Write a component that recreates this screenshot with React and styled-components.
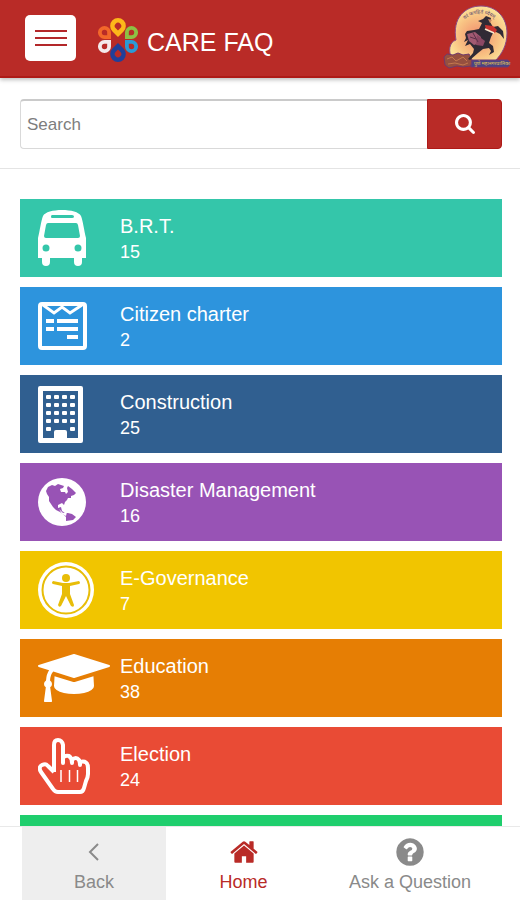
import React, { useState } from "react";
import styled, { createGlobalStyle } from "styled-components";

const GlobalStyle = createGlobalStyle`
    * {
        box-sizing: border-box;
    }
    body {
        margin: 0;
        background: #fff;
        font-family: "Liberation Sans", Arial, sans-serif;
    }
`;

const Page = styled.div`
    display: flex;
    flex-direction: column;
    height: 100vh;
`;

const Header = styled.header`
    display: flex;
    align-items: center;
    flex-shrink: 0;
    height: 78px;
    padding: 0 9px 0 25px;
    background: #b92b27;
    border-bottom: 2px solid #ae1a17;
    box-shadow: 0 2px 4px rgba(0, 0, 0, 0.25);
`;

const MenuButton = styled.button`
    display: flex;
    flex-direction: column;
    align-items: center;
    justify-content: center;
    gap: 5px;
    width: 51px;
    height: 46px;
    padding: 0;
    border: none;
    border-radius: 5px;
    background: #fff;
`;

const MenuLine = styled.span`
    width: 32px;
    height: 2px;
    background: #b3282a;
`;

const Brand = styled.div`
    display: flex;
    align-items: center;
    flex: 1;
    gap: 9px;
    margin-left: 22px;
    padding-top: 4px;
`;

const Title = styled.h1`
    margin: 0;
    padding-top: 4px;
    color: #fff;
    font-size: 25px;
    font-weight: 400;
    line-height: 30px;
`;

const SearchForm = styled.form`
    display: flex;
    flex-shrink: 0;
    padding: 21px 18px 19px 20px;
    border-bottom: 1px solid #e4e4e4;
`;

const SearchInput = styled.input`
    flex: 1;
    min-width: 0;
    height: 50px;
    padding: 0 6px;
    border: 1px solid #d9d9d9;
    border-top: 2px solid #cacaca;
    border-right: none;
    border-radius: 4px 0 0 4px;
    color: #555;
    font-family: inherit;
    font-size: 17px;

    &::placeholder {
        color: #7d7d7d;
    }
`;

const SearchButton = styled.button`
    display: flex;
    align-items: center;
    justify-content: center;
    width: 75px;
    height: 50px;
    padding: 0;
    border: 1px solid #ae1a17;
    border-radius: 0 4px 4px 0;
    background: #b92b27;
    color: #fff;
`;

const List = styled.main`
    display: flex;
    flex-direction: column;
    flex: 1;
    gap: 10px;
    min-height: 0;
    padding: 30px 18px 0 20px;
    overflow: hidden;
`;

const Card = styled.a`
    display: flex;
    align-items: center;
    flex-shrink: 0;
    height: 78px;
    padding-left: 18px;
    background: ${({ $color }) => $color};
    color: #fff;
    text-decoration: none;
`;

const IconSlot = styled.span`
    display: flex;
    width: 82px;
    color: #fff;
`;

const CardText = styled.span`
    display: flex;
    flex-direction: column;
    padding-top: 2px;
`;

const CardName = styled.span`
    font-size: 20px;
    line-height: 26px;
`;

const CardCount = styled.span`
    font-size: 18px;
    line-height: 26px;
`;

const BottomNav = styled.nav`
    display: grid;
    grid-template-columns: 144fr 155fr 178fr;
    flex-shrink: 0;
    height: 74px;
    padding: 0 21px 0 22px;
    border-top: 1px solid #e9e9e9;
    background: #fff;
`;

const NavItem = styled.a`
    display: flex;
    flex-direction: column;
    align-items: center;
    padding-top: 8px;
    background: ${({ $shaded }) => ($shaded ? "#eee" : "transparent")};
    color: ${({ $active }) => ($active ? "#b92b27" : "#8a8a8a")};
    font-size: 18px;
    line-height: 26px;
    text-decoration: none;
`;

const NavIcon = styled.span`
    display: flex;
    align-items: center;
    height: 34px;
`;

// each petal points at the middle of the flower, tip at 0,0
const PETALS = [
    ["#f2672a", "translate(13 21) rotate(-45) scale(.93)"],
    ["#8dc044", "translate(27 21) rotate(45) scale(.93)"],
    ["#f4e9ea", "translate(13 22) rotate(-135) scale(.93)"],
    ["#2a9bd6", "translate(27 22) rotate(135) scale(.93)"],
    ["#fdb71a", "translate(20 19) scale(1.12)"],
    ["#213f99", "translate(20 25) rotate(180) scale(1.12)"],
];

const CareLogo = () => (
    <svg width="40" height="44" viewBox="0 0 40 44" aria-hidden="true">
        {PETALS.map(([fill, transform]) => (
            <g key={fill} transform={transform}>
                <path d="M0 0L-4.950 -4.950A7 7 0 1 1 4.950 -4.950Z" fill={fill} />
                <path d="M0 -5.800L-2 -7.800A2.900 2.900 0 1 1 2 -7.800Z" fill="#b92b27" />
            </g>
        ))}
    </svg>
);

const CityEmblem = () => (
    <svg width="68" height="68" viewBox="0 0 68 68" role="img" aria-label="City emblem">
        <defs>
            <radialGradient id="sun" cx=".5" cy=".55" r=".6">
                <stop offset="0" stopColor="#f08a6c" />
                <stop offset=".6" stopColor="#f8c283" />
                <stop offset="1" stopColor="#fdec9f" />
            </radialGradient>
            <path id="arc" d="M17 23A22 22 0 0 1 57 22" />
        </defs>
        <path
            d="M9 54C5 48 6 38 13 36C9 14 22 2 38 2C54 2 64 14 64 29C64 41 59 50 52 57H12Z"
            fill="url(#sun)"
            stroke="#8a4a86"
            strokeWidth="1"
        />
        <path
            d="M1 53L4 50L10 51L15 49L20 51L26 50L29 56L28 62L20 63L14 62L6 64L2 61Z"
            fill="#96503f"
            stroke="#70396b"
        />
        <path
            d="M4 55L9 53L13 57L20 53L24 57M5 60L12 59L20 61L25 59"
            fill="none"
            stroke="#c5784e"
        />
        <path
            d="M23 34L21 38L25 36L22 42L27 40L31 45L30 49L25 55L27 56L35 49L40 45L46 44L48 47L46 51L51 48L50 42L46 39L48 33L51 27L57 30L61 35L60 27L55 22L50 23L47 18L48 14L43 12L40 15L35 17L39 19L36 25L31 26L24 27L22 30Z"
            fill="#302a35"
        />
        <path d="M24 30L32 28L38 33L37 39L31 41L26 37Z" fill="#a25a72" />
        <path d="M34 31L42 37L40 42L33 41" fill="#8c4864" />
        <path d="M27 33L33 35M30 29L35 38" stroke="#5b3148" strokeWidth="1" />
        <path d="M42 21L50 22L54 26L52 29L43 26Z" fill="#c8322f" />
        <path d="M42 25L51 29" stroke="#f7ead1" strokeWidth="1.500" />
        <path d="M45 15L49 16L47 19Z" fill="#c98a68" />
        <path d="M29 56H65Q69 59 65 63H28Z" fill="#4a4484" stroke="#713b70" />
        <text x="31" y="61" fill="#e7c750" fontFamily="Noto Sans, sans-serif" fontSize="5">
            पुणे महानगरपालिका
        </text>
        <text fill="#53406b" fontFamily="Noto Sans, sans-serif" fontSize="5">
            <textPath href="#arc" startOffset="9">
                वरं जनहितं ध्येयम्
            </textPath>
        </text>
    </svg>
);

const SearchIcon = () => (
    <svg width="20" height="20" viewBox="64 128 1664 1664" fill="currentColor" aria-hidden="true">
        <path d="M1216 832q0-185-131.500-316.500t-316.500-131.500-316.500 131.500-131.500 316.500 131.500 316.500 316.500 131.500 316.500-131.500 131.500-316.500zm512 832q0 52-38 90t-90 38q-54 0-90-38l-343-342q-179 124-399 124-143 0-273.500-55.500t-225-150-150-225-55.500-273.500 55.500-273.500 150-225 225-150 273.500-55.500 273.500 55.500 225 150 150 225 55.500 273.500q0 220-124 399l343 343q37 37 37 90z" />
    </svg>
);

const BusIcon = () => (
    <svg width="48" height="56" viewBox="0 0 48 56" aria-hidden="true">
        <path
            fill="currentColor"
            fillRule="evenodd"
            d="M24 0C33 0 41 2 43 6C45 11 46 20 48 28V48H44V52Q44 56 40 56T36 52V48H12V52Q12 56 8 56T4 52V48H0V28C2 20 3 11 5 6C7 2 15 0 24 0ZM14 5Q13 5 13 6.500T14 8H34Q36 8 36 6.500T34 5ZM10 13Q8.500 13 8 15L6 26Q6 28 8 28H40Q42 28 42 26L40 15Q39.500 13 38 13ZM8 34.500A3.500 3.500 0 1 0 8 41.500A3.500 3.500 0 1 0 8 34.500ZM40 34.500A3.500 3.500 0 1 0 40 41.500A3.500 3.500 0 1 0 40 34.500Z"
        />
    </svg>
);

const CharterIcon = () => (
    <svg width="49" height="48" viewBox="0 0 49 48" aria-hidden="true">
        <rect x="2" y="2" width="45" height="44" rx="2" fill="none" stroke="currentColor" strokeWidth="4" />
        <path d="M5 3L16 11L24 5L32 11L44 3" fill="none" stroke="currentColor" strokeWidth="3" />
        <path
            d="M8 17H16V21H8ZM19 17H40V21H19ZM8 25H16V29H8ZM19 25H40V29H19ZM29 33H40V37H29Z"
            fill="currentColor"
        />
    </svg>
);

const BuildingIcon = () => (
    <svg width="45" height="57" viewBox="0 0 45 57" fill="currentColor" aria-hidden="true">
        <path
            fillRule="evenodd"
            d="M2 0H43Q45 0 45 2V55Q45 57 43 57H2Q0 57 0 55V2Q0 0 2 0ZM5 5V52H16V46Q16 44 18 44H27Q29 44 29 46V52H40V5Z"
        />
        {[11, 19, 27, 35, 43].map((y) =>
            [10, 18, 26, 34]
                .filter((x) => y < 43 || x === 10 || x === 34)
                .map((x) => <rect key={`${x}-${y}`} x={x - 2} y={y - 2} width="5" height="4" rx="1" />)
        )}
    </svg>
);

const GlobeIcon = ({ land }) => (
    <svg width="48" height="48" viewBox="0 0 48 48" aria-hidden="true">
        <circle cx="24" cy="24" r="24" fill="currentColor" />
        <path
            fill={land}
            d="M8 13L10 9L14 7L17 8L20 6L23 7L26 8L25 10L22 11L23 14L27 14L28 16L30 14L29 10L30 8L34 11L38 15L36 17L33 18L33 20L30 20L29 22L27 24L26 27L24 25L20 27L20 30L23 29L24 33L27 35L30 35L34 36L38 39L35 42L28 43L28 39L26 37L22 34L18 32L15 29L11 23L11 19L9 16Z"
        />
        <path d="M21 31L25 35L29 34L28 38L24 36Z" fill="currentColor" />
    </svg>
);

const AccessIcon = ({ line }) => (
    <svg width="56" height="56" viewBox="0 0 56 56" aria-hidden="true">
        <circle cx="28" cy="28" r="28" fill="currentColor" />
        <circle cx="28" cy="28" r="23.500" fill="none" stroke={line} strokeWidth="2" />
        <circle cx="28" cy="16" r="4" fill={line} />
        <path
            fill={line}
            d="M15 19Q13 21 15 22L24 24V32L20 43Q21 46 23 44L28 34L33 44Q36 46 36 43L32 32V24L41 22Q43 21 41 19L31 21H25Z"
        />
    </svg>
);

const CapIcon = () => (
    <svg width="72" height="56" viewBox="0 0 2304 1792" fill="currentColor" aria-hidden="true">
        <path d="M1774 836l18 316q4 69-82 128t-235 93.500-323 34.500-323-34.500-235-93.500-82-128l18-316 574 181q22 7 48 7t48-7zm530-324q0 23-22 31l-1120 352q-4 1-10 1t-10-1l-652-206q-43 34-71 111.500t-34 178.500q63 36 63 109 0 69-58 107l58 433q2 14-8 25-9 11-24 11h-192q-15 0-24-11-10-11-8-25l58-433q-58-38-58-107 0-73 65-111 11-207 98-330l-333-104q-22-8-22-31t22-31l1120-352q4-1 10-1t10 1l1120 352q22 8 22 31z" />
    </svg>
);

const HandIcon = () => (
    <svg width="53" height="56" viewBox="0 0 53 56" fill="none" stroke="currentColor" aria-hidden="true">
        <path
            d="M16 34V7Q16 2 20 2T25 7V25V20Q27 17 31 18Q34 20 34 25V22Q38 18 41 22Q42 24 42 27V24Q50 22 50 30V36Q50 39 48 43L46 50Q45 54 42 54H20Q17 54 15 51L3 34Q0 29 4 27T10 28L16 34"
            strokeWidth="4"
            strokeLinejoin="round"
        />
        <path d="M23 32V44M31.500 32V44M39.500 32V44" strokeWidth="1.500" />
    </svg>
);

const BackIcon = () => (
    <svg width="12" height="20" viewBox="0 0 12 20" fill="none" stroke="currentColor" aria-hidden="true">
        <path d="M10 2L2 10L10 18" strokeWidth="2" />
    </svg>
);

const HomeIcon = () => (
    <svg width="30" height="30" viewBox="0 0 1792 1792" fill="currentColor" aria-hidden="true">
        <path d="M1472 992v480q0 26-19 45t-45 19h-384v-384h-256v384h-384q-26 0-45-19t-19-45v-480q0-1 .5-3t.5-3l575-474 575 474q1 2 1 6zm223-69l-62 74q-8 9-21 11h-3q-13 0-21-7l-692-577-692 577q-12 8-24 7-13-2-21-11l-62-74q-8-10-7-23.500t11-21.500l719-599q32-26 76-26t76 26l244 204v-195q0-14 9-23t23-9h192q14 0 23 9t9 23v408l219 182q10 8 11 21.500t-7 23.500z" />
    </svg>
);

const QuestionIcon = () => (
    <svg width="32" height="32" viewBox="0 0 1792 1792" fill="currentColor" aria-hidden="true">
        <path d="M1024 1376v-192q0-14-9-23t-23-9h-192q-14 0-23 9t-9 23v192q0 14 9 23t23 9h192q14 0 23-9t9-23zm256-672q0-88-55.500-163t-138.500-116-170-41q-243 0-371 213-15 24 8 42l132 100q7 6 19 6 16 0 25-12 53-68 86-92 34-24 86-24 48 0 85.500 26t37.500 59q0 38-20 61t-68 45q-63 28-115.500 86.500t-52.500 125.500v36q0 14 9 23t23 9h192q14 0 23-9t9-23q0-19 21.500-49.500t54.500-49.500q32-18 49-28.500t46-35 44.500-48 28-60.500 12.500-81zm384 192q0 209-103 385.500t-279.500 279.500-385.500 103-385.500-103-279.500-279.500-103-385.500 103-385.500 279.500-279.500 385.500-103 385.500 103 279.500 279.500 103 385.500z" />
    </svg>
);

const categories = [
    { name: "B.R.T.", count: 15, color: "#34c6aa", icon: <BusIcon /> },
    { name: "Citizen charter", count: 2, color: "#2d94dd", icon: <CharterIcon /> },
    { name: "Construction", count: 25, color: "#305f90", icon: <BuildingIcon /> },
    { name: "Disaster Management", count: 16, color: "#9853b5", icon: <GlobeIcon land="#9853b5" /> },
    { name: "E-Governance", count: 7, color: "#f1c500", icon: <AccessIcon line="#e8bd08" /> },
    { name: "Education", count: 38, color: "#e67e04", icon: <CapIcon /> },
    { name: "Election", count: 24, color: "#e94b35", icon: <HandIcon /> },
    { color: "#1fce6d" },
];

const App = () => {
    const [query, setQuery] = useState("");

    return (
        <Page>
            <GlobalStyle />
            <Header>
                <MenuButton type="button" aria-label="Menu">
                    <MenuLine />
                    <MenuLine />
                    <MenuLine />
                </MenuButton>
                <Brand>
                    <CareLogo />
                    <Title>CARE FAQ</Title>
                </Brand>
                <CityEmblem />
            </Header>
            <SearchForm role="search" onSubmit={(e) => e.preventDefault()}>
                <SearchInput
                    type="text"
                    aria-label="Search"
                    placeholder="Search"
                    value={query}
                    onChange={(e) => setQuery(e.target.value)}
                />
                <SearchButton type="submit" aria-label="Submit search">
                    <SearchIcon />
                </SearchButton>
            </SearchForm>
            <List>
                {categories.map((el) => (
                    <Card key={el.color} href="#" $color={el.color}>
                        <IconSlot>{el.icon}</IconSlot>
                        <CardText>
                            <CardName>{el.name}</CardName>
                            <CardCount>{el.count}</CardCount>
                        </CardText>
                    </Card>
                ))}
            </List>
            <BottomNav>
                <NavItem href="#" $shaded>
                    <NavIcon>
                        <BackIcon />
                    </NavIcon>
                    Back
                </NavItem>
                <NavItem href="#" $active>
                    <NavIcon>
                        <HomeIcon />
                    </NavIcon>
                    Home
                </NavItem>
                <NavItem href="#">
                    <NavIcon>
                        <QuestionIcon />
                    </NavIcon>
                    Ask a Question
                </NavItem>
            </BottomNav>
        </Page>
    );
};

export default App;
